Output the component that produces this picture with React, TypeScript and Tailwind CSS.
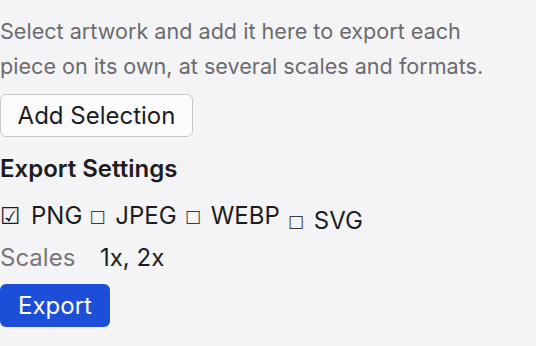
export default function App() {
  return (
    <div className="min-h-screen bg-[#f4f4f6] pt-[14px] font-['Inter',sans-serif] text-[24px] leading-[30px] text-[#1d1d1f]">
      <p className="text-[21.6px] leading-[35px] text-[#6b6b70]">
        Select artwork and add it here to export each
        <br />
        piece on its own, at several scales and formats.
      </p>
      <button className="mt-[10px] flex h-[43px] w-[193px] items-center justify-center rounded-[6px] border border-[#c8c8cc] bg-[#fbfbfd] text-[#1d1d1f]">
        Add Selection
      </button>
      <h2 className="mt-[17px] font-semibold">Export Settings</h2>
      <div className="mt-[17px] flex h-[30px] items-start">
        <span className="w-[31px] font-['DejaVu_Sans'] text-[23px]">☑</span>
        <span>PNG</span>
        <span className="ml-[7px] w-[26px] pt-[2px] font-['DejaVu_Sans'] text-[18px] text-[#3a3a3c]">☐</span>
        <span>JPEG</span>
        <span className="ml-[8px] w-[26px] pt-[2px] font-['DejaVu_Sans'] text-[18px] text-[#3a3a3c]">☐</span>
        <span>WEBP</span>
        <span className="mt-[7px] ml-[8px] w-[26px] font-['DejaVu_Sans'] text-[18px] text-[#3a3a3c]">☐</span>
        <span className="mt-[5px]">SVG</span>
      </div>
      <div className="mt-[12px] flex">
        <span className="w-[100px] text-[#77777b]">Scales</span>
        <span>1x, 2x</span>
      </div>
      <button className="mt-[11px] flex h-[43px] w-[110px] items-center justify-center rounded-[6px] bg-[#1d4ed8] text-white">
        Export
      </button>
    </div>
  );
}
